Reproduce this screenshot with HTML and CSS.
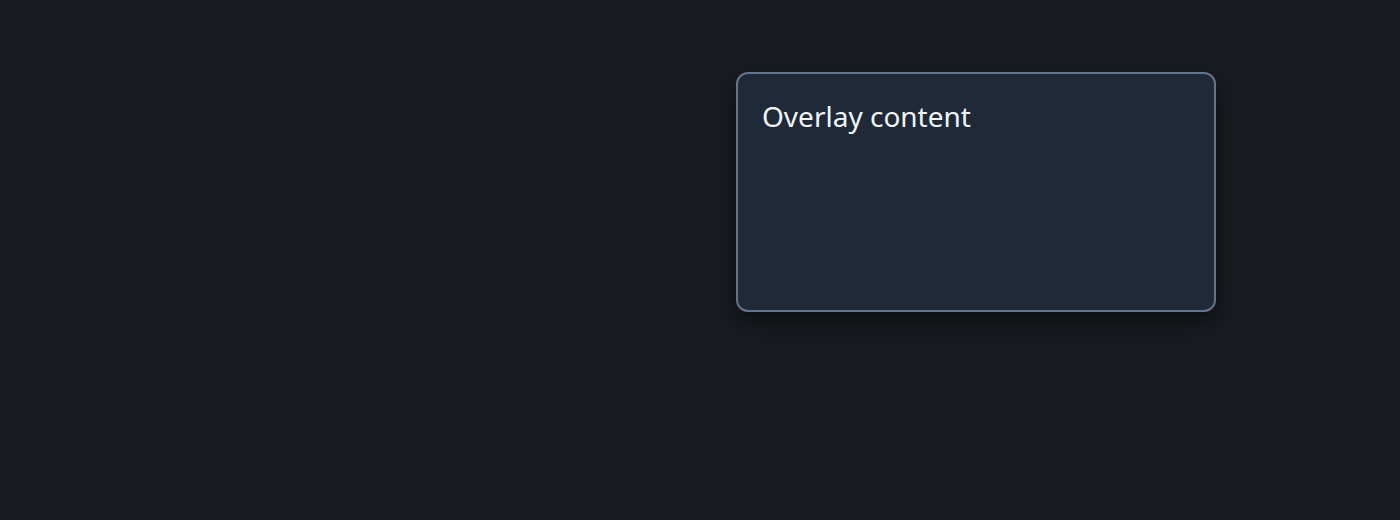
FILE: index.html
```html
<!DOCTYPE html>
<html lang="en">
<head>
    <meta charset="UTF-8">
    <meta name="viewport" content="width=device-width, initial-scale=1.0">
    <title>Overlay</title>
    <link rel="stylesheet" href="styles.css">
</head>
<body>
    <div class="stage">
        <div class="overlay">
            <p class="overlay-text">Overlay content</p>
        </div>
    </div>
</body>
</html>
```

FILE: styles.css
```css
* {
    margin: 0;
    padding: 0;
    box-sizing: border-box;
    font-family: 'Noto Sans', 'Open Sans', sans-serif;
}

body {
    background: #181b20;
    min-height: 100vh;
    overflow: hidden;
}

.stage {
    display: flex;
    padding: 72px 0 0 736px;
}

.overlay {
    width: 480px;
    height: 240px;
    padding: 22px 24px;
    background: #1f2937;
    border: 2px solid #64748b;
    border-radius: 12px;
    box-shadow: 0 10px 25px rgba(0, 0, 0, 0.45);
}

.overlay-text {
    color: #f1f5f9;
    font-size: 28px;
    line-height: 40px;
}
```
